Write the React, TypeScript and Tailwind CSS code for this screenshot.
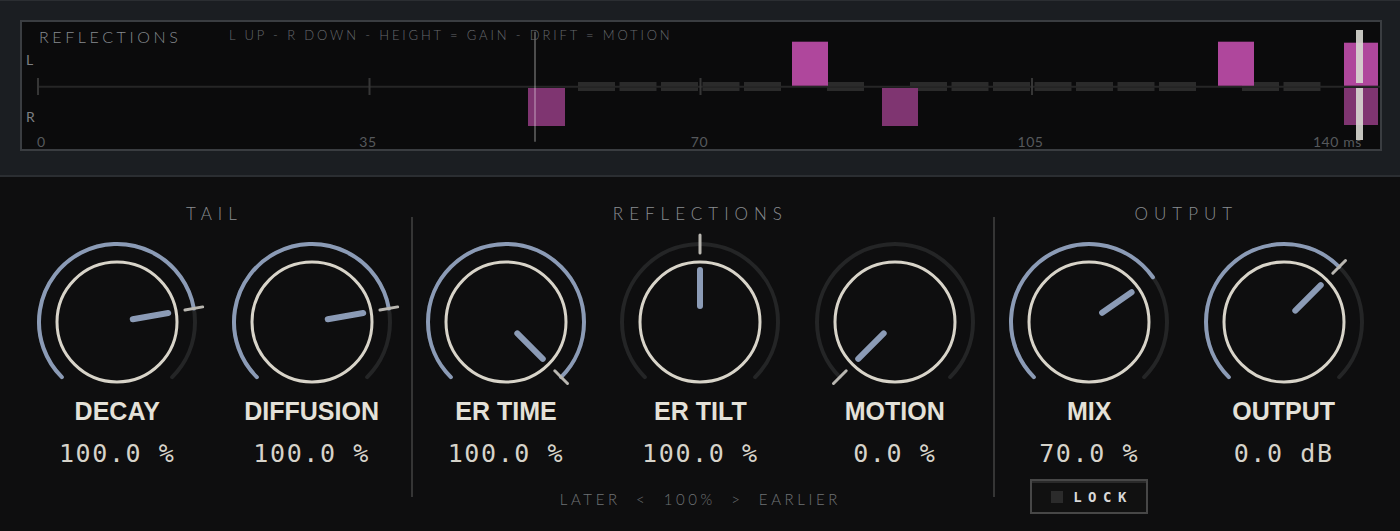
import type { ReactNode } from "react";

const BLUE = "#8b9bb6";
const TRACK = "#242526";
const RING = "#d8d4c9";

// angle in degrees, 0 = straight up, positive = clockwise
function polar(r: number, deg: number, c = 90) {
  const a = (deg * Math.PI) / 180;
  return [c + r * Math.sin(a), c - r * Math.cos(a)];
}

function arcPath(r: number, from: number, to: number) {
  const [x1, y1] = polar(r, from);
  const [x2, y2] = polar(r, to);
  const large = to - from > 180 ? 1 : 0;
  return `M ${x1} ${y1} A ${r} ${r} 0 ${large} 1 ${x2} ${y2}`;
}

type KnobProps = {
  label: string;
  value: string;
  angle: number;
  filled?: boolean;
  marker?: boolean;
  children?: ReactNode;
};

function Knob({ label, value, angle, filled = true, marker = true, children }: KnobProps) {
  const [ax, ay] = polar(16, angle);
  const [bx, by] = polar(52, angle);
  const [mx1, my1] = polar(69, angle);
  const [mx2, my2] = polar(87, angle);

  return (
    <div className="flex flex-1 flex-col items-center">
      <svg width="180" height="166" viewBox="0 0 180 166">
        <path d={arcPath(78, -135, 135)} fill="none" stroke={TRACK} strokeWidth="4" strokeLinecap="round" />
        {filled && angle > -135 && (
          <path d={arcPath(78, -135, angle)} fill="none" stroke={BLUE} strokeWidth="4" strokeLinecap="round" />
        )}
        <circle cx="90" cy="90" r="60" fill="none" stroke={RING} strokeWidth="3" />
        <line x1={ax} y1={ay} x2={bx} y2={by} stroke={BLUE} strokeWidth="6" strokeLinecap="round" />
        {marker && (
          <line x1={mx1} y1={my1} x2={mx2} y2={my2} stroke="#b9b7b1" strokeWidth="3" strokeLinecap="round" />
        )}
      </svg>
      <div className="font-['Liberation_Sans',sans-serif] text-[25px] leading-[26px] font-bold text-[#e4e1d8]">
        {label}
      </div>
      <div className="mt-[17px] whitespace-pre font-['DejaVu_Sans_Mono',monospace] text-[25px] leading-[26px] tracking-[1.6px] text-[#d6d3ca]">
        {value}
      </div>
      {children}
    </div>
  );
}

function Group({ title, width, children, footer }: { title: string; width: string; children: ReactNode; footer?: ReactNode }) {
  return (
    <div className={`flex shrink-0 flex-col ${width}`}>
      <div className="pt-[28px] text-center text-[17px] leading-[17px] font-light tracking-[6px] text-[#8a8d91]">
        {title}
      </div>
      <div className="mt-[10px] flex">{children}</div>
      {footer}
    </div>
  );
}

const DASHES = [0, 1, 2, 3, 4, 6, 8, 9, 10, 11, 12, 13, 14, 16, 17];

// x, width, L/R side and block height (gain)
const TAPS = [
  { x: 506, w: 37, side: "R", h: 38 },
  { x: 770, w: 36, side: "L", h: 44 },
  { x: 860, w: 36, side: "R", h: 38 },
  { x: 1196, w: 36, side: "L", h: 44 },
  { x: 1322, w: 34, side: "L", h: 43 },
  { x: 1322, w: 34, side: "R", h: 37 },
];

function ReflectionMap() {
  return (
    <svg className="absolute inset-0" width="1358" height="127" viewBox="0 0 1358 127">
      <line x1="16" y1="64.75" x2="1358" y2="64.75" stroke="#262626" strokeWidth="2" />
      {[16, 347.5, 678.5, 1010].map((x) => (
        <line key={x} x1={x} y1="56" x2={x} y2="73" stroke="#363636" strokeWidth="2" />
      ))}
      {DASHES.map((i) => (
        <g key={i} fill="#2b2b2b">
          <rect x={556 + 41.5 * i} y="60" width="37" height="4" />
          <rect x={556 + 41.5 * i} y="65.5" width="37" height="3.5" />
        </g>
      ))}
      {TAPS.map((t, i) =>
        t.side === "L" ? (
          <rect key={i} x={t.x} y={63.7 - t.h} width={t.w} height={t.h} fill="#af479c" />
        ) : (
          <rect key={i} x={t.x} y="66" width={t.w} height={t.h} fill="#7f3571" />
        )
      )}
      <line x1="513" y1="9.7" x2="513" y2="119.7" stroke="#ffffff" strokeOpacity="0.27" strokeWidth="2" />
      <rect x="1334" y="8" width="7" height="53" fill="#d8d8d2" fillOpacity="0.9" />
      <rect x="1334" y="66" width="7" height="52" fill="#d8d8d2" fillOpacity="0.9" />

      <g fontFamily="Lato, sans-serif">
        <text x="4" y="43" fontSize="14" fill="#7c7f83">L</text>
        <text x="4" y="99.7" fontSize="14" fill="#7c7f83">R</text>
        <g fontSize="14" fill="#56595c" letterSpacing="0.6">
          <text x="15" y="125.3">0</text>
          <text x="346" y="125.3" textAnchor="middle">35</text>
          <text x="677.5" y="125.3" textAnchor="middle">70</text>
          <text x="1008.5" y="125.3" textAnchor="middle">105</text>
          <text x="1340" y="125.3" textAnchor="end">140 ms</text>
        </g>
      </g>
    </svg>
  );
}

export default function App() {
  return (
    <div className="h-[531px] w-[1400px] overflow-hidden bg-[#0e0e0f] font-['Lato',sans-serif]">
      <div className="h-[177px] border-t border-b-2 border-t-[#2b2e32] border-b-[#2b2e32] bg-[#1b1e22] px-[20px] pt-[19px]">
        <div className="relative h-[131px] w-[1362px] border-2 border-[#3a3d41] bg-[#0b0b0c]">
          <ReflectionMap />
          <div className="relative flex items-start pt-[7px] pl-[17px] leading-none">
            <span className="w-[190px] text-[16px] font-light tracking-[3.6px] text-[#868a8f]">REFLECTIONS</span>
            <span className="text-[13px] font-light tracking-[2.85px] text-[#66696d]">
              L UP - R DOWN - HEIGHT = GAIN - DRIFT = MOTION
            </span>
          </div>
        </div>
      </div>

      <div className="flex px-[20px]">
        <Group title="TAIL" width="w-[388.8px]">
          <Knob label="DECAY" value="100.0 %" angle={80} />
          <Knob label="DIFFUSION" value="100.0 %" angle={80} />
        </Group>

        <div className="mt-[40px] ml-[2px] -mr-[4px] h-[280px] w-[2px] shrink-0 bg-[#353535]" />

        <Group
          title="REFLECTIONS"
          width="w-[583.2px]"
          footer={
            <div className="mt-[24px] text-center whitespace-pre text-[15px] leading-[16px] font-light tracking-[3.6px] text-[#6f7275]">
              {"LATER  <  100%  >  EARLIER"}
            </div>
          }
        >
          <Knob label="ER TIME" value="100.0 %" angle={135} />
          <Knob label="ER TILT" value="100.0 %" angle={0} filled={false} />
          <Knob label="MOTION" value="0.0 %" angle={-135} filled={false} />
        </Group>

        <div className="mt-[40px] ml-[1px] -mr-[3px] h-[280px] w-[2px] shrink-0 bg-[#353535]" />

        <Group title="OUTPUT" width="w-[388.8px]">
          <Knob label="MIX" value="70.0 %" angle={55} marker={false}>
            <button className="mt-[12px] flex h-[35px] w-[118px] items-center border-2 border-[#474747] bg-[#111111] pl-[19px] shadow-[inset_0_2px_0_#2a2a2a]">
              <span className="h-[12px] w-[12px] bg-[#2b2b2b]" />
              <span className="ml-[10px] font-['DejaVu_Sans_Mono',monospace] text-[14px] leading-none font-bold tracking-[6.5px] text-[#d8d8d8]">
                LOCK
              </span>
            </button>
          </Knob>
          <Knob label="OUTPUT" value="0.0 dB" angle={45} />
        </Group>
      </div>
    </div>
  );
}
